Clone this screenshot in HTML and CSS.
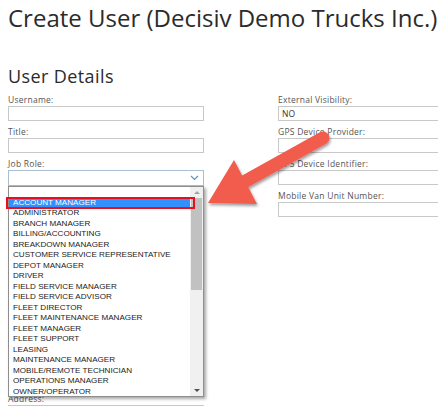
FILE: index.html
```html
<!DOCTYPE html>
<html lang="en">

<head>
    <meta charset="UTF-8">
    <meta name="viewport" content="width=device-width, initial-scale=1.0">
    <title>Create User</title>
    <link rel="stylesheet" href="styles.css">
</head>

<body>

    <h1 class="title">Create User (Decisiv Demo Trucks Inc.)</h1>
    <h2 class="section">User Details</h2>

    <div class="form">
        <div class="col">
            <div class="field">
                <label>Username:</label>
                <div class="input"></div>
            </div>
            <div class="field">
                <label>Title:</label>
                <div class="input"></div>
            </div>
            <div class="field job">
                <label>Job Role:</label>
                <div class="select">
                    <svg width="9" height="6" viewBox="0 0 9 6"><path d="M1 1 L4.5 4.5 L8 1" fill="none" stroke="#5b93c7" stroke-width="1.2"/></svg>
                </div>
                <div class="list">
                    <div class="options">
                        <div class="opt"></div>
                        <div class="opt picked">ACCOUNT MANAGER</div>
                        <div class="opt">ADMINISTRATOR</div>
                        <div class="opt">BRANCH MANAGER</div>
                        <div class="opt">BILLING/ACCOUNTING</div>
                        <div class="opt">BREAKDOWN MANAGER</div>
                        <div class="opt">CUSTOMER SERVICE REPRESENTATIVE</div>
                        <div class="opt">DEPOT MANAGER</div>
                        <div class="opt">DRIVER</div>
                        <div class="opt">FIELD SERVICE MANAGER</div>
                        <div class="opt">FIELD SERVICE ADVISOR</div>
                        <div class="opt">FLEET DIRECTOR</div>
                        <div class="opt">FLEET MAINTENANCE MANAGER</div>
                        <div class="opt">FLEET MANAGER</div>
                        <div class="opt">FLEET SUPPORT</div>
                        <div class="opt">LEASING</div>
                        <div class="opt">MAINTENANCE MANAGER</div>
                        <div class="opt">MOBILE/REMOTE TECHNICIAN</div>
                        <div class="opt">OPERATIONS MANAGER</div>
                        <div class="opt">OWNER/OPERATOR</div>
                    </div>
                    <div class="scroll">
                        <span class="up"></span>
                        <div class="thumb"></div>
                        <span class="down"></span>
                    </div>
                </div>
            </div>
            <div class="field">
                <label>Address:</label>
                <div class="input"></div>
            </div>
        </div>

        <div class="col">
            <div class="field">
                <label>External Visibility:</label>
                <div class="input">NO</div>
            </div>
            <div class="field">
                <label>GPS Device Provider:</label>
                <div class="input"></div>
            </div>
            <div class="field">
                <label>GPS Device Identifier:</label>
                <div class="input"></div>
            </div>
            <div class="field">
                <label>Mobile Van Unit Number:</label>
                <div class="input"></div>
            </div>
        </div>
    </div>

    <svg class="arrow" width="438" height="406" viewBox="0 0 438 406">
        <defs>
            <filter id="sh" x="-20%" y="-20%" width="140%" height="140%">
                <feDropShadow dx="1" dy="2" stdDeviation="1.5" flood-color="#000" flood-opacity="0.4"/>
            </filter>
        </defs>
        <g filter="url(#sh)" fill="#f15b4d">
            <line x1="244" y1="182" x2="323" y2="138" stroke="#f15b4d" stroke-width="13" stroke-linecap="round"/>
            <polygon points="208,203 234,160 257,204"/>
        </g>
    </svg>

</body>

</html>
```

FILE: styles.css
```css
body {
    margin: 0;
    padding: 4px 0 0 8px;
    width: 430px;
    height: 402px;
    overflow: hidden;
    position: relative;
    font-family: "Open Sans", "DejaVu Sans", sans-serif;
    color: #2b2b2b;
    background: #fff;
}

.title {
    margin: 0;
    font-size: 24px;
    line-height: 28px;
    font-weight: 400;
    white-space: nowrap;
}

.section {
    margin: 34px 0 0;
    font-size: 18px;
    line-height: 20px;
    font-weight: 400;
    letter-spacing: 0.4px;
}

.form {
    display: grid;
    grid-template-columns: 196px 196px;
    column-gap: 74px;
    margin-top: 9px;
}

.col {
    display: flex;
    flex-direction: column;
}

.field {
    display: flex;
    flex-direction: column;
    margin-bottom: 6px;
}

.field label {
    font-size: 8.5px;
    line-height: 10px;
    letter-spacing: 0.25px;
    color: #555;
    margin-bottom: 1px;
}

.input {
    height: 13px;
    border: 1px solid #c8c8c8;
    font-size: 8.5px;
    line-height: 13px;
    padding-left: 3px;
    color: #333;
}

.col:last-child .input {
    width: 200px;
}

.job {
    margin-bottom: 0;
}

.select {
    height: 14px;
    border: 1px solid #a9bed3;
    display: flex;
    justify-content: flex-end;
    align-items: center;
    padding-right: 4px;
}

.list {
    position: relative;
    z-index: 1;
    display: flex;
    height: 209px;
    border: 1px solid #8e8e8e;
    box-shadow: 2px 2px 3px rgba(0, 0, 0, 0.35);
    background: #fff;
    margin-bottom: -3px;
}

.options {
    flex: 1;
}

.opt {
    height: 10.5px;
    line-height: 10.5px;
    font-family: "Liberation Sans", Arial, sans-serif;
    font-size: 8.1px;
    color: #222;
    padding-left: 4px;
    white-space: nowrap;
}

.picked {
    position: relative;
    background: #3390ff;
    color: #fff;
}

.picked::after {
    content: "";
    position: absolute;
    left: -3px;
    right: -5px;
    top: -1px;
    bottom: -1px;
    border: 2px solid #e8101e;
}

.scroll {
    width: 13px;
    background: #f0f0f0;
    display: flex;
    flex-direction: column;
    align-items: center;
}

.up,
.down {
    width: 0;
    height: 0;
    border-left: 3px solid transparent;
    border-right: 3px solid transparent;
    margin: 4px 0;
}

.up {
    border-bottom: 3px solid #a3a3a3;
}

.down {
    border-top: 3px solid #505050;
    margin-top: auto;
}

.thumb {
    width: 11px;
    height: 92px;
    background: #c1c1c1;
}

.arrow {
    position: absolute;
    left: 0;
    top: 0;
    z-index: 2;
    pointer-events: none;
}
```
